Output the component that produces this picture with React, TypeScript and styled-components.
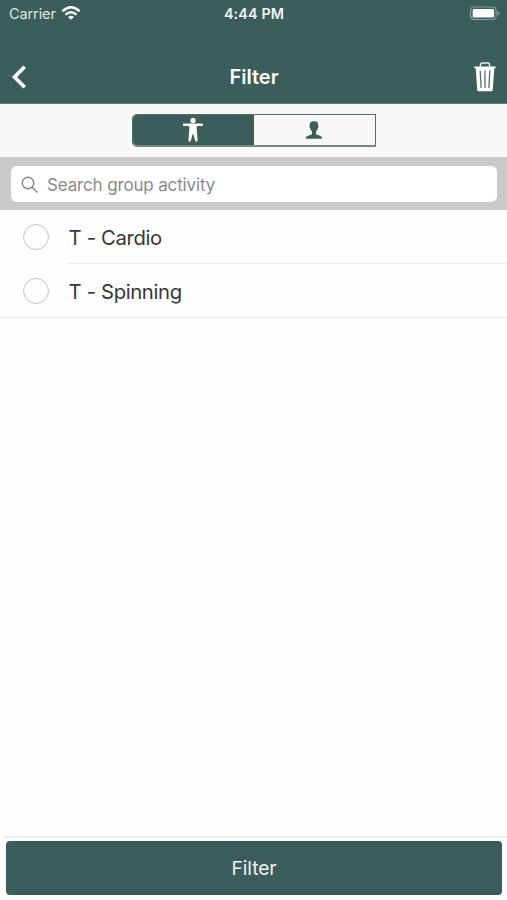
import React, { useState } from "react";
import styled, { createGlobalStyle } from "styled-components";

const green = "#3b5d5b";

const GlobalStyle = createGlobalStyle`
  * { box-sizing: border-box; }
  body { margin: 0; background: #fff; font-family: Inter, "Liberation Sans", sans-serif; }
  button { font: inherit; padding: 0; border: 0; background: none; color: inherit; cursor: pointer; }
  svg { display: block; }
`;

const Screen = styled.div`
  height: 900px;
  display: flex;
  flex-direction: column;
  background: #fefefe;
  overflow: hidden;
`;

const Header = styled.header`
  height: 104px;
  flex: none;
  background: ${green};
  border-bottom: 1px solid #5f7b79;
  color: #fff;
`;

const StatusBar = styled.div`
  height: 27px;
  display: grid;
  grid-template-columns: 1fr auto 1fr;
  align-items: center;
  padding: 0 7px 0 9px;
`;

const Carrier = styled.div`
  display: flex;
  align-items: center;
  gap: 5px;
  font-size: 14.5px;
  letter-spacing: -0.1px;
  color: #dce6e5;
`;

const Clock = styled.time`
  font-size: 14.3px;
  font-weight: 600;
  letter-spacing: 0.15px;
  margin-right: 1px;
  color: #eef4f3;
`;

const Battery = styled.svg`
  justify-self: end;
`;

const NavBar = styled.div`
  height: 76px;
  display: grid;
  grid-template-columns: 1fr auto 1fr;
  align-items: center;
  padding: 24px 10px 0 11px;
`;

const Title = styled.h1`
  margin: 0;
  font-size: 20px;
  line-height: 24px;
  font-weight: 600;
`;

const IconButton = styled.button<{ $end?: boolean }>`
  justify-self: ${(p) => (p.$end ? "end" : "start")};
`;

const SegmentArea = styled.div`
  height: 53px;
  flex: none;
  display: flex;
  justify-content: center;
  align-items: flex-start;
  padding: 10px 0 0 1px;
  background: #f8f8f8;
`;

const Segments = styled.div`
  display: flex;
  width: 244px;
  height: 33px;
  border: 1px solid #4f6f6c;
  border-bottom: 2px solid #708a87;
  border-radius: 5px 0 0 5px;
  overflow: hidden;
`;

const Segment = styled.button<{ $active: boolean }>`
  flex: 1;
  display: flex;
  justify-content: center;
  align-items: center;
  padding-right: 2px;
  background: ${(p) => (p.$active ? green : "transparent")};
  color: ${(p) => (p.$active ? "#fff" : green)};
`;

const SearchArea = styled.div`
  height: 53px;
  flex: none;
  padding: 9px 10px 8px 11px;
  background: #cacaca;
`;

const SearchField = styled.label`
  height: 36px;
  display: flex;
  align-items: center;
  gap: 8px;
  padding: 1px 0 0 10px;
  background: #fff;
  border-radius: 6px;
`;

const SearchInput = styled.input`
  flex: 1;
  min-width: 0;
  padding: 0;
  border: 0;
  outline: 0;
  background: transparent;
  font: 17px Inter, "Liberation Sans", sans-serif;
  letter-spacing: -0.15px;
  color: #333;
  &::placeholder { color: #898989; opacity: 1; }
`;

const List = styled.ul`
  flex: 1;
  margin: 0;
  padding: 0;
  list-style: none;
`;

const Row = styled.li<{ $last?: boolean }>`
  height: 54px;
  display: flex;
  padding-left: 23px;
  border-bottom: ${(p) => (p.$last ? "1px solid #e9e9e9" : "0")};
`;

const Radio = styled.span`
  width: 26px;
  height: 26px;
  margin: 14px 19px 0 0;
  border: 1px solid #c3c3c3;
  border-radius: 50%;
`;

const RowLabel = styled.span<{ $last?: boolean }>`
  flex: 1;
  padding-left: 0.6px;
  border-bottom: ${(p) => (p.$last ? "0" : "1px solid #ebebeb")};
  font-size: 20.3px;
  line-height: 55px;
  letter-spacing: -0.36px;
  color: #363636;
`;

const Footer = styled.footer`
  flex: none;
  height: 64px;
  margin-left: 4px;
  padding: 3px 5px 0 2px;
  border-top: 2px solid #ededef;
`;

const FilterButton = styled.button`
  display: block;
  width: 100%;
  height: 54px;
  border-radius: 4px;
  background: ${green};
  color: #edf4f3;
  font-size: 19.3px;
  letter-spacing: -0.1px;
  line-height: 54px;
`;

const activities = ["T - Cardio", "T - Spinning"];

export default function App() {
  const [tab, setTab] = useState(0);
  return (
    <>
      <GlobalStyle />
      <Screen>
        <Header>
          <StatusBar>
            <Carrier>
              Carrier
              <svg width="20" height="15" viewBox="0 0 20 15" fill="none" stroke="#fff" strokeWidth="2.5">
                <path d="M1.4 5.2Q10-2.6 18.6 5.2" />
                <path d="M4.6 8.6Q10 3.9 15.4 8.6" />
                <path d="M10 13.7 7 10.9Q10 8.5 13 10.9Z" fill="#fff" stroke="none" />
              </svg>
            </Carrier>
            <Clock>4:44 PM</Clock>
            <Battery width="31" height="15" viewBox="0 0 31 15">
              <rect x="1.6" y="1" width="25.5" height="12.5" rx="3.4" fill="none" stroke="#83a09b" strokeWidth="1.2" />
              <rect x="3.7" y="3" width="21.4" height="8.6" rx="1.4" fill="#fff" />
              <path d="M28.5 5v4.8Q30.7 8.7 30.7 7.4T28.5 5Z" fill="#83a09b" />
            </Battery>
          </StatusBar>
          <NavBar>
            <IconButton aria-label="Back">
              <svg width="16" height="24" viewBox="0 0 16 24" fill="none" stroke="#fff" strokeWidth="3.6">
                <path d="M13.7 1.8 3.5 12l10.2 10.2" />
              </svg>
            </IconButton>
            <Title>Filter</Title>
            <IconButton $end aria-label="Clear filters">
              <svg width="24" height="30" viewBox="0 0 24 30">
                <path d="M7.5 5V2.7Q7.5 1 9.2 1h5.6q1.7 0 1.7 1.7V5" fill="none" stroke="#e8efee" strokeWidth="1.4" />
                <path d="M1.4 4.5h21.2v1.7h-1.3l-1.5 21.5q-.1 1.6-1.8 1.6H6q-1.7 0-1.8-1.6L2.7 6.2H1.4Z" fill="#fff" />
                <path d="m7.2 8.5.9 17.5M12 8.5V26m4.8-17.5L15.9 26" stroke="#526f6d" strokeWidth="1.3" />
              </svg>
            </IconButton>
          </NavBar>
        </Header>

        <SegmentArea>
          <Segments>
            <Segment $active={tab === 0} onClick={() => setTab(0)} aria-label="Group activities">
              <svg width="22" height="26" viewBox="0 0 22 26" fill="currentColor">
                <circle cx="11" cy="3.4" r="2.6" />
                <path d="M1.8 6.5h18.4q.9 0 .9 1.3t-.9 1.3h-4.7q-1 .2-.9 1.3l1 12.7q.1 1.6-1.2 1.6-1.1 0-1.4-1.4L11.3 17h-.6L9 23.3q-.3 1.4-1.4 1.4-1.3 0-1.2-1.6l1-12.7q.1-1.1-.9-1.3H1.8Q.9 9.1.9 7.8t.9-1.3Z" />
              </svg>
            </Segment>
            <Segment $active={tab === 1} onClick={() => setTab(1)} aria-label="Personal activities">
              <svg width="18" height="18" viewBox="0 0 18 18" fill="currentColor">
                <path d="M9 .3c3.5 0 4.5 1.9 4.2 4.7.6.6.3 2.2-.5 2.6-.4 1.500-1 2.400-1.700 3v2.300c1 1.600 6 .7 6.300 4.900H.7c.3-4.200 5.300-3.300 6.300-4.900v-2.300c-.7-.6-1.300-1.500-1.700-3-.8-.4-1.100-2-.5-2.600C4.500 2.200 5.500.3 9 .3Z" />
              </svg>
            </Segment>
          </Segments>
        </SegmentArea>

        <SearchArea>
          <SearchField>
            <svg width="18" height="18" viewBox="0 0 18 18" fill="none" stroke="#858585" strokeWidth="1.4">
              <circle cx="7" cy="7" r="5.8" />
              <path d="m11.2 11.2 5.3 5.3" />
            </svg>
            <SearchInput placeholder="Search group activity" />
          </SearchField>
        </SearchArea>

        <List>
          {activities.map((name, i) => {
            const last = i === activities.length - 1;
            return (
              <Row key={name} $last={last}>
                <Radio />
                <RowLabel $last={last}>{name}</RowLabel>
              </Row>
            );
          })}
        </List>

        <Footer>
          <FilterButton>Filter</FilterButton>
        </Footer>
      </Screen>
    </>
  );
}
